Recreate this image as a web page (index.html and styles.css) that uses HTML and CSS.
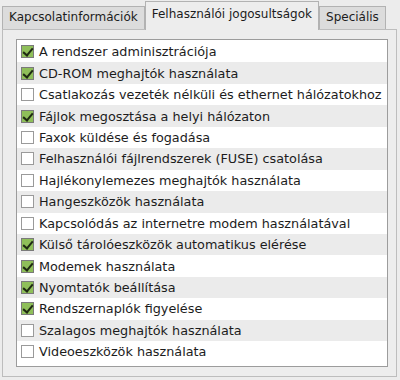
FILE: index.html
```html
<!DOCTYPE html>
<html lang="hu">

<head>
    <meta charset="UTF-8">
    <title>Felhasználói jogosultságok</title>
    <link rel="stylesheet" href="styles.css">
</head>

<body>
    <div class="window">
        <div class="tabs">
            <div class="tab">Kapcsolatinformációk</div>
            <div class="tab active">Felhasználói jogosultságok</div>
            <div class="tab">Speciális</div>
        </div>
        <div class="panel">
            <ul class="list">
                <li><span class="check on"></span>A rendszer adminisztrációja</li>
                <li><span class="check on"></span>CD-ROM meghajtók használata</li>
                <li><span class="check"></span>Csatlakozás vezeték nélküli és ethernet hálózatokhoz</li>
                <li><span class="check on"></span>Fájlok megosztása a helyi hálózaton</li>
                <li><span class="check"></span>Faxok küldése és fogadása</li>
                <li><span class="check"></span>Felhasználói fájlrendszerek (FUSE) csatolása</li>
                <li><span class="check"></span>Hajlékonylemezes meghajtók használata</li>
                <li><span class="check"></span>Hangeszközök használata</li>
                <li><span class="check"></span>Kapcsolódás az internetre modem használatával</li>
                <li><span class="check on"></span>Külső tárolóeszközök automatikus elérése</li>
                <li><span class="check on"></span>Modemek használata</li>
                <li><span class="check on"></span>Nyomtatók beállítása</li>
                <li><span class="check on"></span>Rendszernaplók figyelése</li>
                <li><span class="check"></span>Szalagos meghajtók használata</li>
                <li><span class="check"></span>Videoeszközök használata</li>
            </ul>
        </div>
    </div>
</body>

</html>
```

FILE: styles.css
```css
* {
    margin: 0;
    padding: 0;
    box-sizing: border-box;
}

body {
    background-color: #ececec;
    font-family: "DejaVu Sans", sans-serif;
    font-size: 12px;
    color: #1c1c1c;
}

.window {
    width: 400px;
    height: 380px;
    padding: 1px 3px 3px 2px;
    display: flex;
    flex-direction: column;
}

.tabs {
    display: flex;
    align-items: flex-end;
    height: 28px;
    position: relative;
    z-index: 1;
}

.tab {
    height: 23px;
    padding: 0 6px;
    line-height: 21px;
    background-color: #dcdcdc;
    border: 1px solid #b2b2b2;
    border-bottom: none;
}

.tab.active {
    height: 29px;
    line-height: 25px;
    background-color: #ededed;
    margin-bottom: -1px;
}

.panel {
    flex: 1;
    background-color: #ededed;
    border: 1px solid #bdbdbd;
    padding: 9px 8px 9px 13px;
}

.list {
    list-style: none;
    background-color: #fff;
    border: 1px solid #9c9c9c;
    height: 100%;
    padding-top: 1px;
    font-size: 12.8px;
}

.list li {
    height: 21.45px;
    display: flex;
    align-items: center;
    padding-left: 4px;
    white-space: nowrap;
}

.list li:nth-child(even) {
    background-color: #ebebeb;
}

.check {
    width: 13px;
    height: 13px;
    border: 1px solid #9a9a9a;
    background-color: #fff;
    margin-right: 5px;
    flex-shrink: 0;
    position: relative;
}

.check.on {
    background-color: #8fbf5a;
    border-color: #7a7a7a;
}

.check.on::after {
    content: "";
    position: absolute;
    left: 3px;
    top: 0;
    width: 4px;
    height: 8px;
    border: solid #1e2a12;
    border-width: 0 2px 2px 0;
    transform: rotate(40deg);
}
```
